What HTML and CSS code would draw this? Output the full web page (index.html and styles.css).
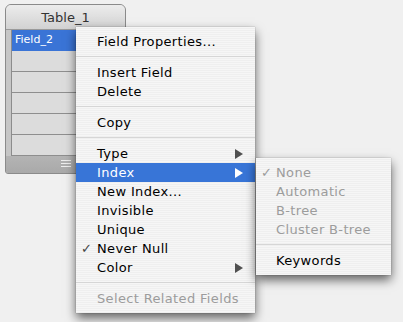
FILE: index.html
```html
<!DOCTYPE html>
<html lang="en">
<head>
  <meta charset="UTF-8">
  <title>Table_1 context menu</title>
  <link rel="stylesheet" href="styles.css">
</head>
<body>

  <!-- Table window -->
  <div class="table-win">
    <div class="table-title">Table_1</div>
    <div class="table-body">
      <div class="field-list">
        <div class="field-row selected">Field_2</div>
        <div class="field-row"></div>
        <div class="field-row"></div>
        <div class="field-row"></div>
        <div class="field-row"></div>
        <div class="field-row"></div>
      </div>
    </div>
    <div class="table-foot"><span class="grip"></span></div>
  </div>

  <!-- Context menu -->
  <div class="menu main-menu">
    <div class="item">Field Properties...</div>
    <div class="sep"></div>
    <div class="item">Insert Field</div>
    <div class="item">Delete</div>
    <div class="sep"></div>
    <div class="item">Copy</div>
    <div class="sep"></div>
    <div class="item sub">Type</div>
    <div class="item sub active">Index</div>
    <div class="item">New Index...</div>
    <div class="item">Invisible</div>
    <div class="item">Unique</div>
    <div class="item checked">Never Null</div>
    <div class="item sub">Color</div>
    <div class="sep"></div>
    <div class="item disabled">Select Related Fields</div>
  </div>

  <!-- Index submenu -->
  <div class="menu sub-menu">
    <div class="item disabled checked">None</div>
    <div class="item disabled">Automatic</div>
    <div class="item disabled">B-tree</div>
    <div class="item disabled">Cluster B-tree</div>
    <div class="sep"></div>
    <div class="item">Keywords</div>
  </div>

</body>
</html>
```

FILE: styles.css
```css
body {
  margin: 0;
  padding: 4px 0 0 5px;
  background-color: #f0f0f0;
  font-family: "DejaVu Sans", "Lucida Grande", sans-serif;
  height: 322px;
  box-sizing: border-box;
  position: relative;
  overflow: hidden;
}

/* table window */
.table-win {
  width: 119px;
  height: 168px;
  border: 1px solid #8a8a8a;
  border-radius: 6px 6px 3px 3px;
  background: #c6c6c6;
  display: flex;
  flex-direction: column;
  overflow: hidden;
}

.table-title {
  height: 24px;
  line-height: 25px;
  text-align: center;
  font-size: 13px;
  color: #333;
  background: linear-gradient(#ececec, #d2d2d2);
  border-bottom: 1px solid #9a9a9a;
}

.table-body {
  flex: 1;
  padding-left: 5px;
  display: flex;
}

.field-list {
  flex: 1;
  border-left: 1px solid #8c8c8c;
  background: #dcdcdc;
}

.field-row {
  height: 20px;
  border-bottom: 1px solid #8e8e8e;
  font-size: 11px;
  line-height: 20px;
  padding-left: 3px;
}

.field-row.selected {
  background: #3a74d6;
  color: #fff;
  border-bottom-color: #3a74d6;
}

.table-foot {
  height: 19px;
  background: linear-gradient(#b4b4b4, #a9a9a9);
  display: flex;
  justify-content: center;
  align-items: center;
}

.grip {
  width: 10px;
  height: 5px;
  border-top: 1px solid #eee;
  border-bottom: 1px solid #eee;
  position: relative;
  top: -1px;
}

.grip::after {
  content: "";
  position: absolute;
  left: 0;
  right: 0;
  top: 2px;
  border-top: 1px solid #eee;
}

/* menus */
.menu {
  position: absolute;
  padding: 5px 0;
  background: repeating-linear-gradient(#f6f6f6 0 1px, #efefef 1px 2px);
  box-shadow: 0 5px 10px rgba(0, 0, 0, 0.6), 0 0 1px rgba(0, 0, 0, 0.4);
  font-size: 13px;
  letter-spacing: 0.35px;
  color: #000;
}

.main-menu {
  left: 76px;
  top: 27px;
  width: 179px;
}

.sub-menu {
  left: 256px;
  top: 158px;
  width: 135px;
}

.item {
  height: 19px;
  line-height: 19px;
  padding-left: 21px;
  position: relative;
  white-space: nowrap;
}

.sub-menu .item {
  padding-left: 20px;
}

.item.disabled {
  color: #9c9c9c;
}

.item.active {
  background: #3875d7;
  color: #fff;
}

.item.checked::before {
  content: "✓";
  position: absolute;
  left: 5px;
  top: 0;
  color: #444;
}

.item.disabled.checked::before {
  color: #9c9c9c;
}

.item.sub::after {
  content: "";
  position: absolute;
  right: 12px;
  top: 5px;
  border-left: 8px solid #505050;
  border-top: 5px solid transparent;
  border-bottom: 5px solid transparent;
}

.item.active::after {
  border-left-color: #fff;
}

.sep {
  height: 12px;
  position: relative;
}

.sep::after {
  content: "";
  position: absolute;
  left: 0;
  right: 0;
  top: 5px;
  border-top: 1px solid #d6d6d6;
}
```
